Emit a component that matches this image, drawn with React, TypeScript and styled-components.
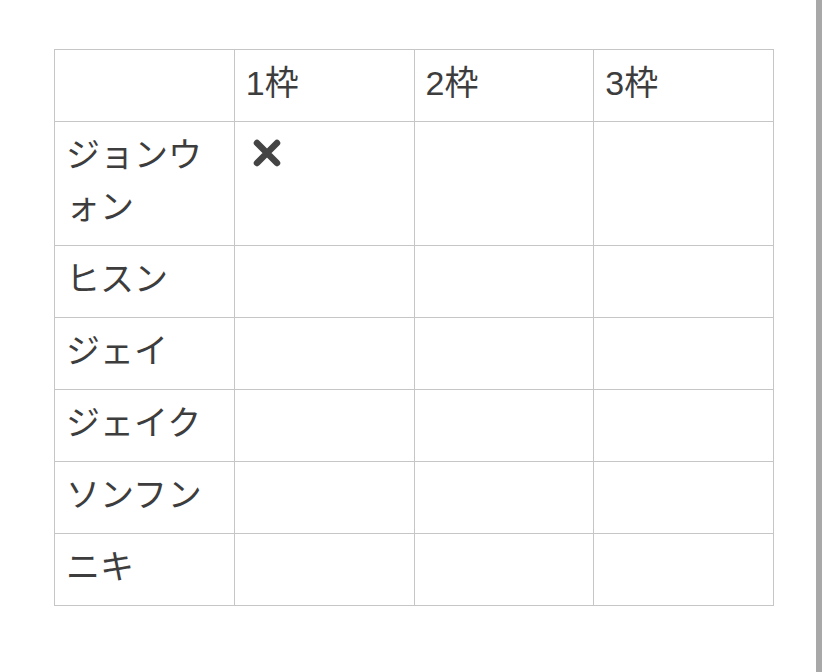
import React from 'react';
import styled, { createGlobalStyle } from 'styled-components';

const GlobalStyle = createGlobalStyle`
  html, body {
    margin: 0;
    padding: 0;
    background: #fff;
  }
  body {
    font-family: "Liberation Sans", "Noto Sans CJK JP", sans-serif;
    color: #3d3d3d;
  }
`;

const Page = styled.div`
  display: flex;
  width: 100vw;
  height: 100vh;
  overflow: hidden;
`;

const Main = styled.main`
  flex: 1;
  padding: 49px 0 0 54px;
`;

const ScrollBar = styled.div`
  width: 6px;
  margin-right: 6px;
  background: #a8a8a8;
`;

const Table = styled.table`
  border-collapse: collapse;
  table-layout: fixed;
  width: 720px;
`;

const Cell = styled.td`
  border: 1px solid #c6c6c6;
  padding: 7px 12px 12px 11px;
  font-size: 34px;
  line-height: 52px;
  vertical-align: top;
  text-align: left;
  font-weight: normal;
  word-break: break-all;
`;

const HeadCell = styled(Cell).attrs({ as: 'th' })``;

const Mark = styled.svg`
  width: 30px;
  height: 30px;
  margin-left: 6px;
  vertical-align: -1px;
`;

const names = ['ジョンウォン', 'ヒスン', 'ジェイ', 'ジェイク', 'ソンフン', 'ニキ'];
const slots = ['1枠', '2枠', '3枠'];

const Cross = () => (
  <Mark viewBox="0 0 30 30">
    <path
      d="M5 5 L25 25 M25 5 L5 25"
      stroke="#444"
      strokeWidth="6.5"
      strokeLinecap="round"
      fill="none"
    />
  </Mark>
);

const App = () => {
  return (
    <>
      <GlobalStyle />
      <Page>
        <Main>
          <Table>
            <thead>
              <tr>
                <HeadCell />
                {slots.map((s) => (
                  <HeadCell key={s}>{s}</HeadCell>
                ))}
              </tr>
            </thead>
            <tbody>
              {names.map((name, i) => (
                <tr key={name}>
                  <Cell>{name}</Cell>
                  {slots.map((s, j) => (
                    <Cell key={s}>{i === 0 && j === 0 ? <Cross /> : null}</Cell>
                  ))}
                </tr>
              ))}
            </tbody>
          </Table>
        </Main>
        <ScrollBar />
      </Page>
    </>
  );
};

export default App;
